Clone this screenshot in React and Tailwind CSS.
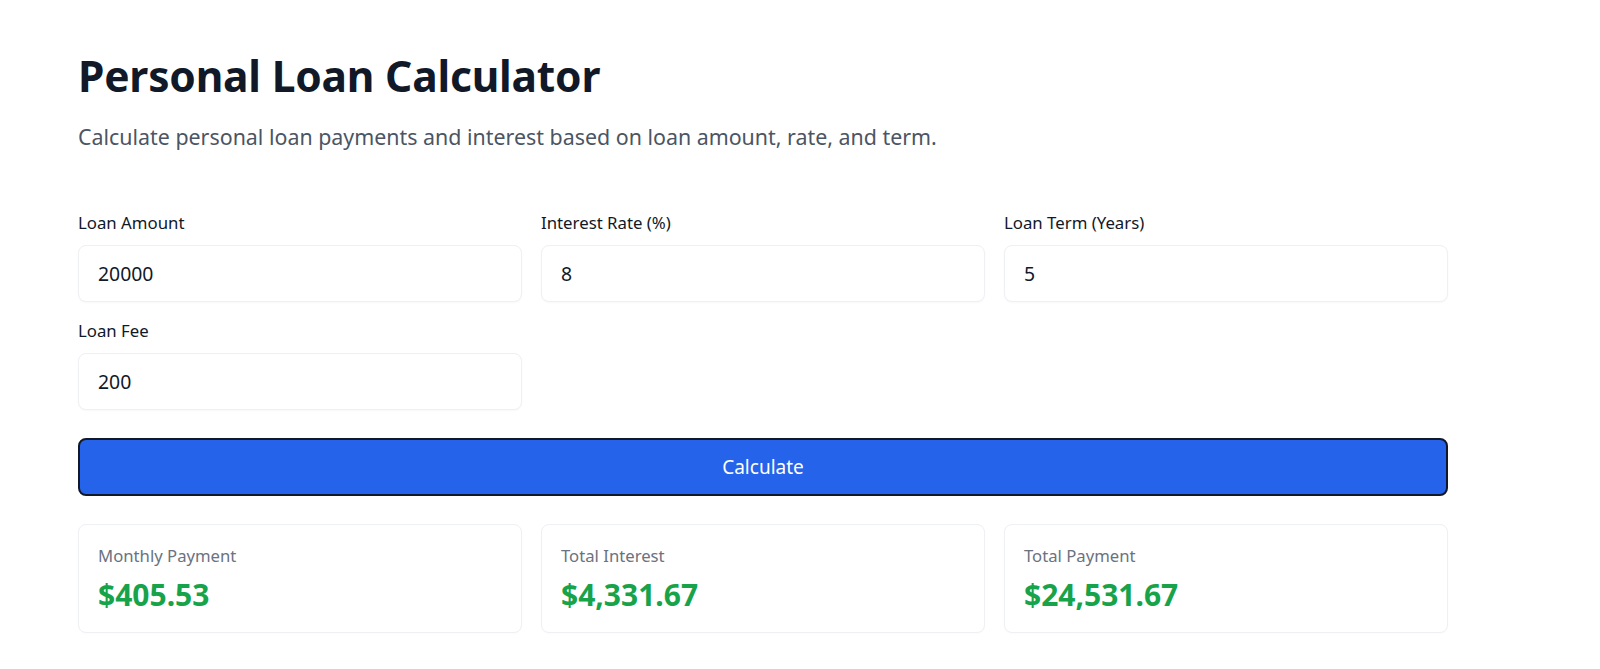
import React, { useState } from 'react';

// Personal loan calculator — inputs, calculate button, result cards.

const font = { fontFamily: '"Noto Sans", "Open Sans", Arial, sans-serif' };

function Field({ label, value, onChange }) {
  return (
    <div className="flex flex-col">
      <label className="mb-[10px] h-[24px] text-[16.8px] leading-[24px] text-[#111827]">{label}</label>
      <input
        className="h-[57px] w-full rounded-lg border border-[#eef0f3] bg-white px-[19px] text-[19.4px] text-[#111827] shadow-[0_1px_2px_rgba(0,0,0,0.03)] outline-none"
        value={value}
        onChange={(e) => onChange(e.target.value)}
      />
    </div>
  );
}

function ResultCard({ label, value }) {
  return (
    <div className="h-[109px] rounded-lg border border-[#eef0f3] bg-white px-[19px] pt-[20px] shadow-[0_1px_2px_rgba(0,0,0,0.02)]">
      <div className="text-[16.7px] leading-[22px] text-[#6b7280]">{label}</div>
      <div className="mt-[9px] text-[30px] font-bold leading-[38px] text-[#16a34a]">{value}</div>
    </div>
  );
}

const money = (n) =>
  '$' + n.toLocaleString('en-US', { minimumFractionDigits: 2, maximumFractionDigits: 2 });

export default function App() {
  const [amount, setAmount] = useState('20000');
  const [rate, setRate] = useState('8');
  const [term, setTerm] = useState('5');
  const [fee, setFee] = useState('200');
  const [result, setResult] = useState(null);

  const calculate = () => {
    const p = parseFloat(amount) || 0;
    const r = (parseFloat(rate) || 0) / 100 / 12;
    const n = (parseFloat(term) || 0) * 12;
    const f = parseFloat(fee) || 0;
    const monthly = r === 0 ? p / n : (p * r) / (1 - Math.pow(1 + r, -n));
    const total = monthly * n + f;
    setResult({ monthly, interest: total - p, total });
  };

  const shown = result || { monthly: 405.53, interest: 4331.67, total: 24531.67 };

  return (
    <div className="min-h-screen bg-white" style={font}>
      <div className="ml-[78px] w-[1370px] pt-[48px]">
        <h1 className="text-[42.5px] font-bold leading-[56px] tracking-[-0.2px] text-[#111827]">
          Personal Loan Calculator
        </h1>
        <p className="mt-[18px] text-[21.4px] leading-[30px] text-[#4b5563]">
          Calculate personal loan payments and interest based on loan amount, rate, and term.
        </p>

        <div className="mt-[59px] grid grid-cols-3 gap-x-[19px] gap-y-[17px]">
          <Field label="Loan Amount" value={amount} onChange={setAmount} />
          <Field label="Interest Rate (%)" value={rate} onChange={setRate} />
          <Field label="Loan Term (Years)" value={term} onChange={setTerm} />
          <Field label="Loan Fee" value={fee} onChange={setFee} />
        </div>

        <button
          onClick={calculate}
          className="mt-[28px] h-[58px] w-full rounded-lg border-2 border-[#111827] bg-[#2563eb] text-[19px] text-white"
        >
          Calculate
        </button>

        <div className="mt-[28px] grid grid-cols-3 gap-x-[19px]">
          <ResultCard label="Monthly Payment" value={money(shown.monthly)} />
          <ResultCard label="Total Interest" value={money(shown.interest)} />
          <ResultCard label="Total Payment" value={money(shown.total)} />
        </div>
      </div>
    </div>
  );
}
